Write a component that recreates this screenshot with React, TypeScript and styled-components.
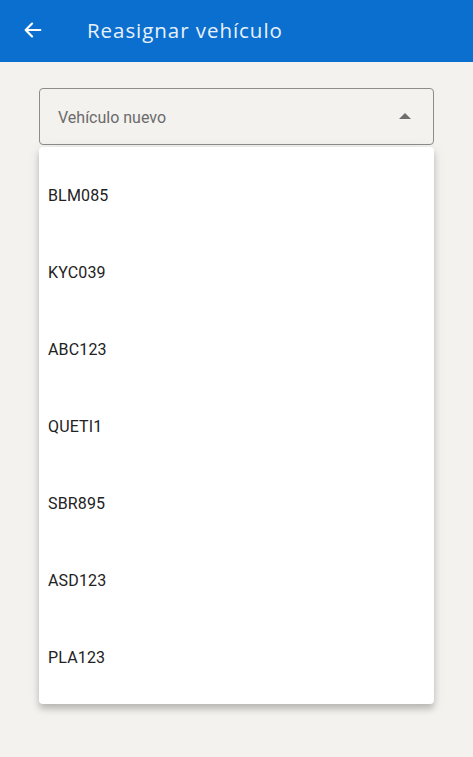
import React from "react";
import styled, { createGlobalStyle } from "styled-components";

const GlobalStyle = createGlobalStyle`
  html, body {
    margin: 0;
    padding: 0;
    background-color: #f3f2ef;
  }
  body {
    font-family: Roboto, "Noto Sans", sans-serif;
  }
`;

const Page = styled.div`
  width: 473px;
  height: 757px;
  background-color: #f3f2ef;
  overflow: hidden;
`;

const Header = styled.header`
  height: 62px;
  box-sizing: border-box;
  background-color: #0b6fcf;
  display: flex;
  align-items: center;
  padding: 0 0 3px 20px;
  gap: 41px;
`;

const BackButton = styled.button`
  width: 26px;
  height: 26px;
  padding: 0;
  border: 0;
  background: transparent;
  display: flex;
  align-items: center;
  justify-content: center;
  cursor: pointer;
`;

const Title = styled.h1`
  margin: 0;
  font-family: "Open Sans", "Noto Sans", sans-serif;
  font-weight: 500;
  font-size: 20.5px;
  color: #e9f1fb;
  letter-spacing: 0.95px;
`;

const Content = styled.main`
  padding: 26px 39px 0 39px;
`;

const SelectBox = styled.div`
  height: 55px;
  border: 1px solid #8c8c8a;
  border-radius: 4px;
  background-color: #f3f2ef;
  display: flex;
  align-items: center;
  justify-content: space-between;
  padding: 0 22px 0 18px;
`;

const Placeholder = styled.span`
  font-size: 16px;
  color: #6b6b6b;
  margin-top: 1px;
`;

const Caret = styled.span`
  width: 0;
  height: 0;
  border-left: 6px solid transparent;
  border-right: 6px solid transparent;
  border-bottom: 6px solid #6e6e6e;
  margin-top: -2px;
`;

const Menu = styled.ul`
  list-style: none;
  margin: 2px 0 0 0;
  padding: 10px 0 8px 0;
  background-color: #ffffff;
  border-radius: 4px;
  box-shadow: 0 5px 6px rgba(0, 0, 0, 0.2), 0 2px 14px rgba(0, 0, 0, 0.08);
`;

const Item = styled.li`
  height: 77px;
  display: flex;
  align-items: center;
  padding-left: 9px;
  font-size: 16px;
  color: #222222;
  letter-spacing: 0.15px;
`;

const vehicles = ["BLM085", "KYC039", "ABC123", "QUETI1", "SBR895", "ASD123", "PLA123"];

function App() {
  return (
    <Page>
      <GlobalStyle />
      <Header>
        <BackButton aria-label="Volver">
          <svg width="22" height="22" viewBox="0 0 24 24" fill="none">
            <path
              d="M20 12H4M11 5l-7 7 7 7"
              stroke="#ffffff"
              strokeWidth="2.4"
              strokeLinecap="round"
              strokeLinejoin="round"
            />
          </svg>
        </BackButton>
        <Title>Reasignar vehículo</Title>
      </Header>
      <Content>
        <SelectBox>
          <Placeholder>Vehículo nuevo</Placeholder>
          <Caret />
        </SelectBox>
        <Menu>
          {vehicles.map((v) => (
            <Item key={v}>{v}</Item>
          ))}
        </Menu>
      </Content>
    </Page>
  );
}

export default App;
